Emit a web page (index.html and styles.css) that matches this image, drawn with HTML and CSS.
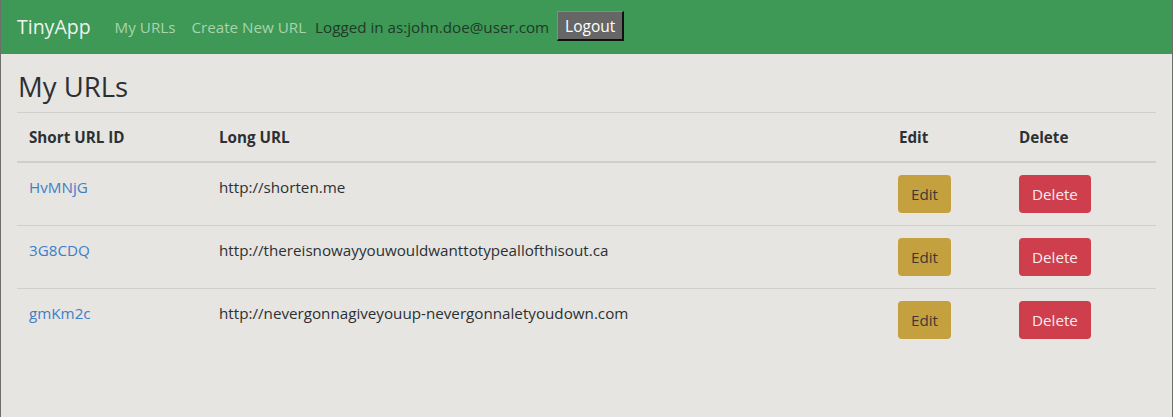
FILE: index.html
```html
<!DOCTYPE html>
<html lang="en">
<head>
<meta charset="utf-8">
<title>TinyApp</title>
<link rel="stylesheet" href="styles.css">
</head>
<body>
<nav class="navbar">
  <a class="brand" href="#">TinyApp</a>
  <a class="nav-link" href="#">My URLs</a>
  <a class="nav-link" href="#">Create New URL</a>
  <span class="login">Logged in as:john.doe@user.com</span>
  <button class="logout">Logout</button>
</nav>
<main class="container">
  <h1 class="title">My URLs</h1>
  <table class="urls">
    <colgroup>
      <col class="c-short"><col class="c-long"><col class="c-edit"><col class="c-del">
    </colgroup>
    <thead>
      <tr><th>Short URL ID</th><th>Long URL</th><th>Edit</th><th>Delete</th></tr>
    </thead>
    <tbody>
      <tr>
        <td><a class="short" href="#">HvMNjG</a></td>
        <td>http://shorten.me</td>
        <td><button class="btn btn-edit">Edit</button></td>
        <td><button class="btn btn-delete">Delete</button></td>
      </tr>
      <tr>
        <td><a class="short" href="#">3G8CDQ</a></td>
        <td>http://thereisnowayyouwouldwanttotypeallofthisout.ca</td>
        <td><button class="btn btn-edit">Edit</button></td>
        <td><button class="btn btn-delete">Delete</button></td>
      </tr>
      <tr>
        <td><a class="short" href="#">gmKm2c</a></td>
        <td>http://nevergonnagiveyouup-nevergonnaletyoudown.com</td>
        <td><button class="btn btn-edit">Edit</button></td>
        <td><button class="btn btn-delete">Delete</button></td>
      </tr>
    </tbody>
  </table>
</main>
</body>
</html>
```
FILE: styles.css
```css
html, body {
  margin: 0;
  padding: 0;
}
body {
  background: #e6e5e1;
  color: #2c3033;
  font-family: "Open Sans", "Noto Sans", sans-serif;
  font-size: 15.2px;
  line-height: 24px;
  min-height: 417px;
  box-sizing: border-box;
  border-left: 1px solid #6e6e6e;
  border-right: 1px solid #6e6e6e;
}
.navbar {
  height: 54px;
  background: #3e9856;
  display: flex;
  align-items: center;
  padding: 0 16px;
  box-sizing: border-box;
}
.brand {
  color: #eef3ee;
  font-size: 19.5px;
  text-decoration: none;
  margin-right: 24px;
}
.nav-link {
  color: #a9d4ac;
  text-decoration: none;
  margin-right: 16px;
}
.login {
  color: #213a27;
  margin-left: -7px;
}
.logout {
  margin-left: 8px;
  margin-top: -2px;
  background: #666666;
  color: #ffffff;
  font-family: "Open Sans", "Noto Sans", sans-serif;
  font-size: 15.5px;
  line-height: 22px;
  padding: 3px 7px 2px 7px;
  border-style: solid;
  border-width: 1px 2px 2px 1px;
  border-color: #8a8a8a #111 #111 #8a8a8a;
}
.container {
  padding: 16px 16px 0 16px;
}
.title {
  font-size: 27.5px;
  font-weight: 500;
  line-height: 34px;
  margin: 0 0 8px 1px;
  color: #2c3033;
}
.urls {
  width: 100%;
  border-collapse: collapse;
  table-layout: fixed;
}
.c-short { width: 190px; }
.c-long { width: 680px; }
.c-edit { width: 120px; }
.c-del { width: auto; }
.urls th, .urls td {
  text-align: left;
  vertical-align: top;
  padding: 12px;
}
.urls th {
  font-weight: 700;
  border-top: 1px solid #d0cfcb;
  border-bottom: 2px solid #d0cfcb;
}
.urls tbody tr + tr td {
  border-top: 1px solid #d0cfcb;
}
.short {
  color: #3f7ec8;
  text-decoration: none;
}
.btn {
  font-family: "Open Sans", "Noto Sans", sans-serif;
  font-size: 15.2px;
  line-height: 24px;
  padding: 6px 12px;
  border: 1px solid transparent;
  border-radius: 4px;
}
.btn-edit {
  background: #c4a13e;
  color: #3b3a33;
  margin-left: -1px;
}
.btn-delete {
  background: #cf3e4d;
  color: #f4ecec;
}
```
